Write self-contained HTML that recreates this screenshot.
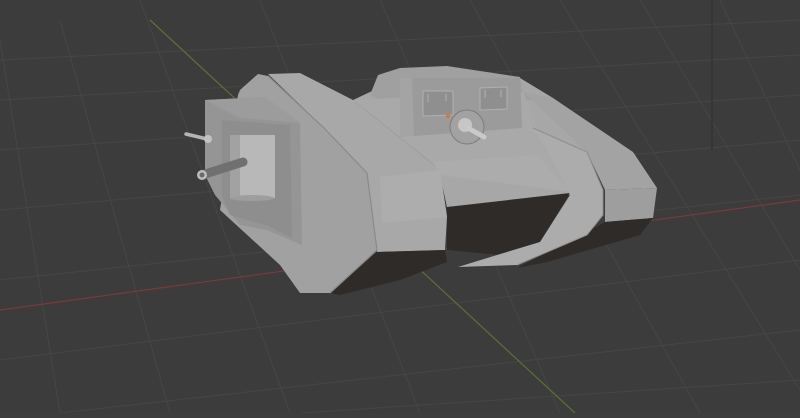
<!DOCTYPE html>
<html><head><style>html,body{margin:0;padding:0;background:#3d3d3d;overflow:hidden}</style></head>
<body>
<svg width="800" height="413" viewBox="0 0 800 413" xmlns="http://www.w3.org/2000/svg">
<rect width="800" height="413" fill="#3c3c3c"/>
<g stroke="#464646" stroke-width="1">
<path d="M0 60L800 20M0 100L800 55M0 150L800 95M0 210L800 140M0 280L800 195M0 360L800 260M60 413L800 330M300 413L800 380"/>
<path d="M0 40L60 413M60 20L170 413M140 0L290 413M260 0L420 413M380 0L560 413M470 0L700 413M560 0L800 390M640 0L800 270M720 0L800 170"/>
</g>
<path d="M0 310L800 200" stroke="#7a3a3e" stroke-width="1.2"/>
<path d="M150 20L575 413" stroke="#5d7038" stroke-width="1.2"/>
<path d="M712 0L712 150" stroke="#2e2e2e"/>
<!-- base fill hull -->
<path d="M353 100L400 78L520 78L553 98L587 152L603 190L570 195L447 207L440 170Z" fill="#a7a7a7"/>
<!-- turret back/top -->
<path d="M370 95L378 75L400 68L447 66L520 77L523 92L540 100L380 100Z" fill="#a0a0a0"/>
<!-- right track -->
<path d="M523 92L553 98L633 152L657 188L605 190L587 152Z" fill="#a3a3a3"/>
<path d="M605 190L657 188L653 218L605 222Z" fill="#9e9e9e"/>
<path d="M605 222L653 218L640 235L547 262L517 268Z" fill="#2e2b29"/>
<!-- hull deck -->
<path d="M353 100L523 92L545 145L570 192L440 175L433 162Z" fill="#a9a9a9"/>
<path d="M433 162L537 155L570 192L440 175Z" fill="#acacac"/>
<path d="M440 175L570 192L570 195L447 207Z" fill="#a7a7a7"/>
<!-- dark front -->
<path d="M447 207L570 193L540 242L500 255L447 250Z" fill="#2e2b29"/>
<!-- right track inner band -->
<path d="M523 118L533 128L587 152L603 190L603 215L587 235L517 265L458 267L497 255L540 242L570 195L545 145Z" fill="#acacac"/>
<path d="M533 128L587 152L603 190L603 215L587 235L517 265" fill="none" stroke="#8e8e8e" stroke-width="1"/>
<!-- turret box -->
<path d="M400 78L520 78L522 128L400 137Z" fill="#9b9b9b"/>
<path d="M400 78L412 78L414 136L400 137Z" fill="#a4a4a4"/>
<path d="M423 91L453 91L453 115L423 116Z" fill="#8f8f8f" stroke="#b0b0b0"/>
<path d="M480 88L507 87L507 109L480 110Z" fill="#8f8f8f" stroke="#b0b0b0"/>
<path d="M428 94V102M446 94V101M485 90V98M501 90V97" stroke="#b0b0b0"/>
<circle cx="467" cy="127" r="17" fill="#a2a2a2" stroke="#7c7c7c"/>
<circle cx="465" cy="125" r="7" fill="#c6c6c6"/>
<path d="M468 128L484 137" stroke="#cacaca" stroke-width="5" stroke-linecap="round"/>
<circle cx="448" cy="116" r="2.2" fill="#d47a30"/>
<!-- left track band -->
<path d="M268 74L300 73L353 100L440 170L447 217L445 250L377 252L367 173L323 127Z" fill="#a8a8a8"/>
<path d="M380 177L440 170L447 217L382 223Z" fill="#adadad"/>
<path d="M377 252L445 250L447 262L400 280L340 295L330 293Z" fill="#2e2b29"/>
<!-- left track slab -->
<path d="M240 90L258 74L268 76L323 127L367 173L377 250L330 293L300 293L280 265L220 210L238 95Z" fill="#a1a1a1"/>
<path d="M268 76L323 127L367 173L377 250L330 293" fill="none" stroke="#8a8a8a" stroke-width="1.2"/>
<!-- sponson -->
<path d="M205 100L265 97L300 123L302 245L267 230L240 225L215 195L205 175Z" fill="#959595"/>
<path d="M205 100L265 97L300 123L240 118Z" fill="#9c9c9c"/>
<path d="M222 120L290 125L292 238L268 226L230 215L222 195Z" fill="#8e8e8e"/>
<rect x="230" y="135" width="45" height="63" fill="#b8b8b8"/>
<rect x="230" y="135" width="10" height="63" fill="#a2a2a2"/>
<ellipse cx="252" cy="198" rx="22" ry="3" fill="#9e9e9e"/>
<path d="M202 175L243 162" stroke="#707070" stroke-width="9" stroke-linecap="round"/>
<circle cx="202" cy="175" r="5" fill="#bdbdbd"/><circle cx="202" cy="175" r="2.5" fill="#6a6a6a"/>
<path d="M186 134L207 139" stroke="#b5b5b5" stroke-width="3.5" stroke-linecap="round"/>
<circle cx="208" cy="139" r="4" fill="#c2c2c2"/>
</svg>
</body></html>
